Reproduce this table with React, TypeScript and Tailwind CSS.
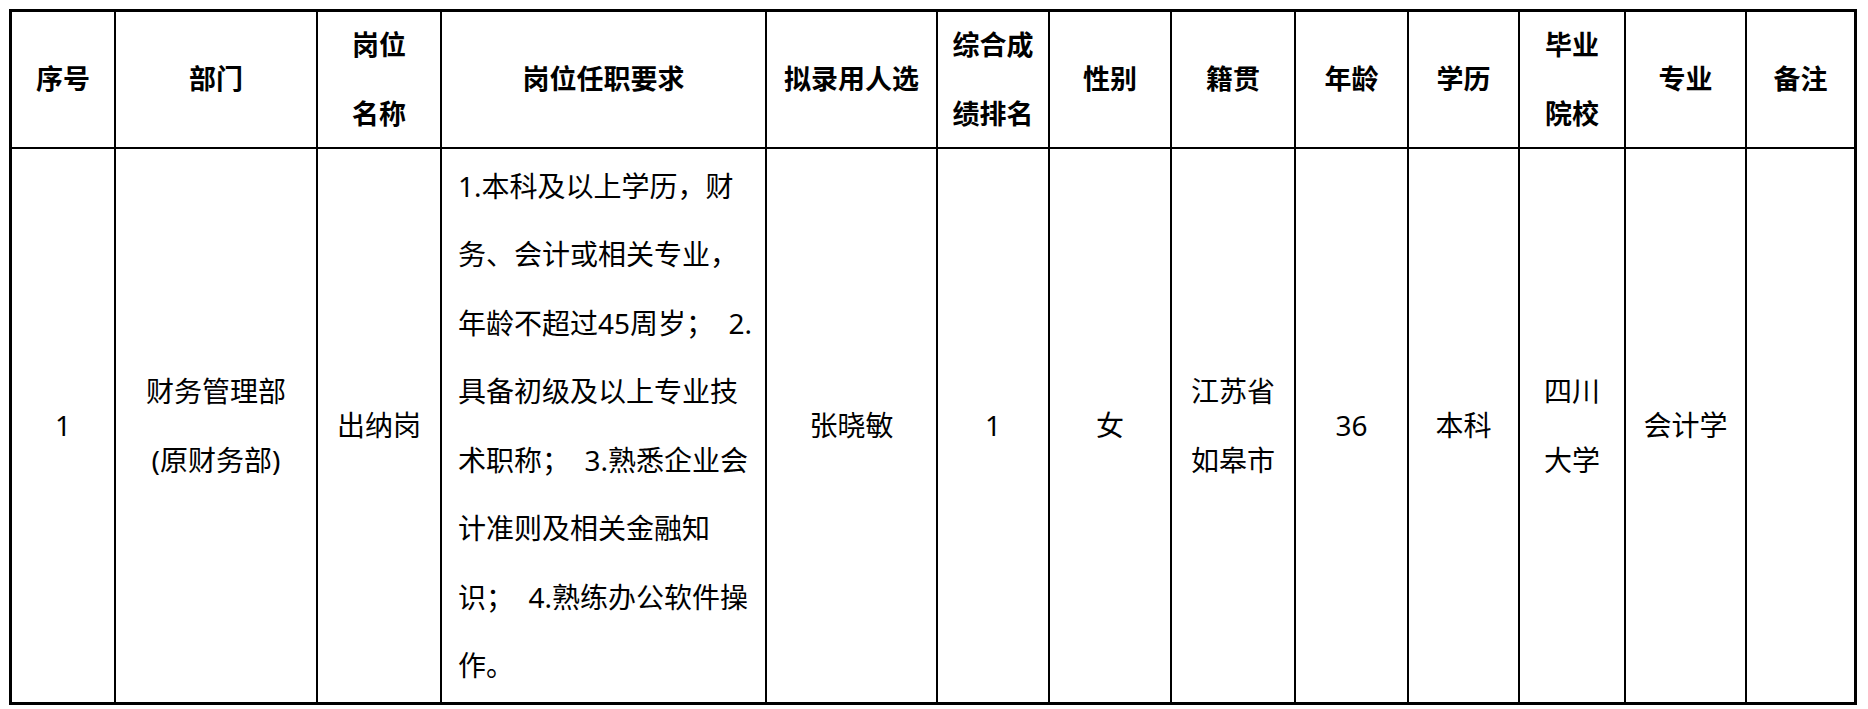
import React from "react";

const font = { fontFamily: '"Noto Sans", "Noto Sans CJK SC", sans-serif' };

type Col = { w: string; head: React.ReactNode; body: React.ReactNode; left?: boolean };

const cols: Col[] = [
  { w: "w-[102px]", head: "序号", body: "1" },
  { w: "w-[202px]", head: "部门", body: <>财务管理部<br />(原财务部)</> },
  { w: "w-[124px]", head: <>岗位<br />名称</>, body: "出纳岗" },
  {
    w: "w-[325px]",
    head: "岗位任职要求",
    left: true,
    body: (
      <>
        1.本科及以上学历，财<br />
        务、会计或相关专业，<br />
        年龄不超过45周岁；&nbsp; 2.<br />
        具备初级及以上专业技<br />
        术职称；&nbsp; 3.熟悉企业会<br />
        计准则及相关金融知<br />
        识；&nbsp; 4.熟练办公软件操<br />
        作。
      </>
    ),
  },
  { w: "w-[171px]", head: "拟录用人选", body: "张晓敏" },
  { w: "w-[112px]", head: <>综合成<br />绩排名</>, body: "1" },
  { w: "w-[122px]", head: "性别", body: "女" },
  { w: "w-[124px]", head: "籍贯", body: <>江苏省<br />如皋市</> },
  { w: "w-[113px]", head: "年龄", body: "36" },
  { w: "w-[111px]", head: "学历", body: "本科" },
  { w: "w-[106px]", head: <>毕业<br />院校</>, body: <>四川<br />大学</> },
  { w: "w-[121px]", head: "专业", body: "会计学" },
  { w: "w-[109px]", head: "备注", body: "" },
];

export default function App() {
  return (
    <div className="min-h-screen w-full bg-white text-black" style={font}>
      <div className="ml-[9px] mt-[9px] w-[1848px] border-[3px] border-black flex">
        {cols.map((c, i) => (
          <div key={i} className={`${c.w} shrink-0 flex flex-col ${i > 0 ? "border-l-2 border-black" : ""}`}>
            <div className="h-[137px] border-b-2 border-black flex flex-col items-center justify-center text-center text-[27px] font-bold leading-[68.5px] whitespace-nowrap">
              <div>{c.head}</div>
            </div>
            <div
              className={`h-[553px] flex flex-col justify-center text-[28px] leading-[68.5px] whitespace-nowrap ${
                c.left ? "items-start pl-[16px] text-left" : "items-center text-center"
              }`}
            >
              <div>{c.body}</div>
            </div>
          </div>
        ))}
      </div>
    </div>
  );
}
